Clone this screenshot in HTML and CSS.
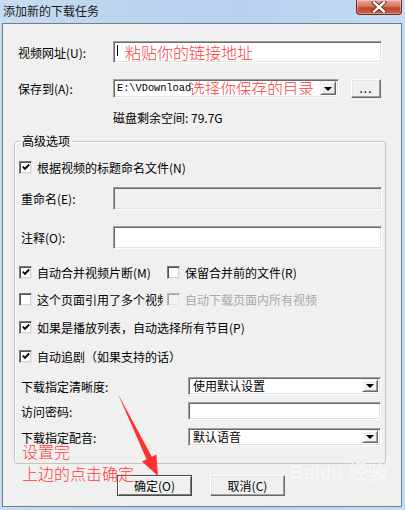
FILE: index.html
```html
<!DOCTYPE html>
<html>
<head>
<meta charset="utf-8">
<link rel="stylesheet" href="styles.css">
</head>
<body>
<div class="window">
  <div class="titlebar">
    <span class="title">添加新的下载任务</span>
    <span class="close">
      <svg width="16" height="12" viewBox="0 0 16 12"><path d="M3 1.5 L13 10.5 M13 1.5 L3 10.5" stroke="#5a2a22" stroke-width="4.2" stroke-linecap="square"/><path d="M3 1.5 L13 10.5 M13 1.5 L3 10.5" stroke="#ffffff" stroke-width="2.4" stroke-linecap="square"/></svg>
    </span>
  </div>
  <div class="client">
    <div class="top">
      <div class="row r-url">
        <span class="lbl">视频网址(U):</span>
        <div class="edit url"><span class="caret"></span><span class="red">粘贴你的链接地址</span></div>
      </div>
      <div class="row r-save">
        <span class="lbl">保存到(A):</span>
        <div class="edit combo save">
          <div class="combo-text"><span class="mono">E:\VDownload</span><span class="red">选择你保存的目录</span></div>
          <span class="dd"><span class="tri"></span></span>
        </div>
        <span class="btn dots">...</span>
      </div>
      <div class="disk">磁盘剩余空间: 79.7G</div>
    </div>

    <fieldset class="group">
      <legend>高级选项</legend>
      <div class="cbrow first">
        <span class="cb checked"><svg width="11" height="11" viewBox="0 0 11 11"><path d="M2 4.5 L4.3 7 L9 2.2" stroke="#000" stroke-width="2" fill="none"/></svg></span>
        <span>根据视频的标题命名文件(N)</span>
      </div>
      <div class="frow rename">
        <span class="flbl">重命名(E):</span>
        <div class="edit wide disabled"></div>
      </div>
      <div class="frow comment">
        <span class="flbl">注释(O):</span>
        <div class="edit wide"></div>
      </div>
      <div class="cbrow c1">
        <div class="col">
          <span class="cb checked"><svg width="11" height="11" viewBox="0 0 11 11"><path d="M2 4.5 L4.3 7 L9 2.2" stroke="#000" stroke-width="2" fill="none"/></svg></span>
          <span class="cbtext">自动合并视频片断(M)</span>
        </div>
        <span class="cb"></span>
        <span>保留合并前的文件(R)</span>
      </div>
      <div class="cbrow c2">
        <div class="col">
          <span class="cb"></span>
          <span class="cbtext clip">这个页面引用了多个视频</span>
        </div>
        <span class="cb off"></span>
        <span class="grey">自动下载页面内所有视频</span>
      </div>
      <div class="cbrow c3">
        <span class="cb checked"><svg width="11" height="11" viewBox="0 0 11 11"><path d="M2 4.5 L4.3 7 L9 2.2" stroke="#000" stroke-width="2" fill="none"/></svg></span>
        <span>如果是播放列表，自动选择所有节目(P)</span>
      </div>
      <div class="cbrow c4">
        <span class="cb checked"><svg width="11" height="11" viewBox="0 0 11 11"><path d="M2 4.5 L4.3 7 L9 2.2" stroke="#000" stroke-width="2" fill="none"/></svg></span>
        <span>自动追剧（如果支持的话）</span>
      </div>
      <div class="brow b1">
        <span class="blbl">下载指定清晰度:</span>
        <div class="edit combo bsel"><div class="combo-text">使用默认设置</div><span class="dd"><span class="tri"></span></span></div>
      </div>
      <div class="brow b2">
        <span class="blbl">访问密码:</span>
        <div class="edit bsel"></div>
      </div>
      <div class="brow b3">
        <span class="blbl">下载指定配音:</span>
        <div class="edit combo bsel"><div class="combo-text">默认语音</div><span class="dd"><span class="tri"></span></span></div>
      </div>
    </fieldset>

    <div class="buttons">
      <span class="btn def">确定(O)</span>
      <span class="btn">取消(C)</span>
    </div>

    <div class="note">设置完<br>上边的点击确定</div>
    <svg class="arrow" width="399" height="482" viewBox="0 0 399 482">
      <polygon points="115,370 148.9,432.7 153.4,430.5 155,452 139,437.5 143.5,435.3" fill="#ff3030"/>
    </svg>
    <div class="watermark">
      <div class="wm-logo">Bai<span class="wm-du">du</span> 经验</div>
      <div class="wm-url">jingyan.baidu.com</div>
    </div>
  </div>
</div>
</body>
</html>
```

FILE: styles.css
```css
html, body {
  margin: 0;
  padding: 0;
}
body {
  width: 405px;
  height: 510px;
  overflow: hidden;
  font-family: "Noto Sans CJK SC", "Liberation Sans", sans-serif;
  font-size: 12px;
  color: #000;
}
.window {
  height: 510px;
  box-sizing: border-box;
  padding: 0 3px 3px 2px;
  display: flex;
  flex-direction: column;
  background: linear-gradient(90deg, #c9dcf1 0%, #bcd4ee 30%, #b8d2ee 60%, #c4dbf2 100%);
}
.titlebar {
  height: 23px;
  display: flex;
  justify-content: space-between;
  align-items: flex-start;
  flex-shrink: 0;
}
.title {
  padding-left: 1px;
  line-height: 21px;
  font-size: 12px;
  color: #1a1a1a;
}
.close {
  width: 46px;
  height: 15px;
  box-sizing: border-box;
  border: 1px solid #6e2a1f;
  border-top: none;
  border-radius: 0 0 4px 4px;
  background: linear-gradient(180deg, #e9a99b 0%, #d8745f 45%, #c4432a 55%, #c95f45 100%);
  display: flex;
  align-items: center;
  justify-content: center;
  box-shadow: inset 0 0 0 1px rgba(255,255,255,0.35);
}
.client {
  flex: 1;
  position: relative;
  background: #f0f0f0;
  border: 1px solid #6f7f93;
}

/* generic controls */
.edit {
  box-sizing: border-box;
  background: #fff;
  border: 1px solid;
  border-color: #a0a0a0 #ffffff #ffffff #a0a0a0;
  box-shadow: inset 1px 1px 0 #696969, inset -1px -1px 0 #e3e3e3;
}
.edit.disabled {
  background: #f0f0f0;
}
.combo {
  display: flex;
  align-items: stretch;
  padding: 1px 2px 2px 2px;
}
.combo-text {
  flex: 1;
  overflow: hidden;
  white-space: nowrap;
  display: flex;
  align-items: center;
  padding-left: 2px;
  line-height: 14px;
}
.dd {
  width: 16px;
  box-sizing: border-box;
  background: #f0f0f0;
  border: 1px solid;
  border-color: #f0f0f0 #696969 #696969 #f0f0f0;
  box-shadow: inset 1px 1px 0 #fff, inset -1px -1px 0 #a0a0a0;
  display: flex;
  align-items: center;
  justify-content: center;
}
.tri {
  width: 0;
  height: 0;
  border-left: 4px solid transparent;
  border-right: 4px solid transparent;
  border-top: 4px solid #000;
  margin-top: 1px;
}
.btn {
  box-sizing: border-box;
  display: flex;
  align-items: center;
  justify-content: center;
  background: #f0f0f0;
  border: 1px solid;
  border-color: #fff #696969 #696969 #fff;
  box-shadow: inset -1px -1px 0 #a0a0a0, inset 1px 1px 0 #e3e3e3;
}
.btn.def {
  border-color: #4a4a4a;
  box-shadow: inset 1px 1px 0 #fff, inset -1px -1px 0 #7a7a7a;
}
.red {
  color: #ff3b3b;
  font-size: 16px;
  font-weight: 300;
  line-height: 16px;
  white-space: nowrap;
}

/* top section */
.top {
  padding-left: 15px;
}
.row {
  display: flex;
  align-items: center;
}
.lbl {
  width: 95px;
  flex-shrink: 0;
}
.r-url {
  margin-top: 17px;
  height: 22px;
}
.url {
  width: 269px;
  height: 22px;
  display: flex;
  align-items: center;
  padding-left: 3px;
}
.caret {
  width: 1px;
  height: 11px;
  background: #000;
  margin-right: 7px;
  margin-top: -4px;
}
.r-save {
  margin-top: 16px;
  height: 19px;
}
.save {
  width: 226px;
  height: 19px;
}
.save .combo-text {
  padding-left: 1px;
}
.mono {
  font-family: "Liberation Mono", "DejaVu Sans Mono", monospace;
  font-size: 10.3px;
  letter-spacing: 0;
}
.save .red {
  margin-left: -2px;
  font-size: 15.6px;
}
.dots {
  width: 30px;
  height: 19px;
  margin-left: 12px;
  line-height: 10px;
  padding-bottom: 2px;
  letter-spacing: 1px;
}
.disk {
  margin-top: 12px;
  padding-left: 95px;
  line-height: 16px;
  height: 16px;
}

/* group box */
.group {
  margin: 7px 0 0 11px;
  padding: 0 0 17px 0;
  width: 372px;
  box-sizing: border-box;
  min-width: 0;
  border: 1px solid #c4c4c4;
  border-radius: 3px;
  box-shadow: inset 1px 1px 0 #fff;
}
.group legend {
  margin-left: 5px;
  padding: 0 2px;
  line-height: 16px;
  font-size: 12px;
}
.cbrow {
  display: flex;
  align-items: center;
  height: 16px;
  padding-left: 4px;
  white-space: nowrap;
}
.cb {
  width: 13px;
  height: 13px;
  box-sizing: border-box;
  flex-shrink: 0;
  background: #fff;
  border: 1px solid;
  border-color: #7a7a7a #e8e8e8 #e8e8e8 #7a7a7a;
  box-shadow: inset 1px 1px 0 #505050, inset -1px -1px 0 #d4d4d4;
  margin-right: 5px;
  display: flex;
  align-items: center;
  justify-content: center;
}
.cb svg {
  margin: 1px 0 0 1px;
}
.cb.off {
  background: #f4f4f4;
  border-color: #b8b8b8 #f0f0f0 #f0f0f0 #b8b8b8;
  box-shadow: inset 1px 1px 0 #a8a8a8, inset -1px -1px 0 #e4e4e4;
}
.col {
  width: 148px;
  display: flex;
  align-items: center;
  flex-shrink: 0;
}
.clip {
  width: 126px;
  overflow: hidden;
}
.grey {
  color: #a8a8a8;
}
.cbrow.first { margin-top: 10px; }
.frow {
  display: flex;
  align-items: center;
  padding-left: 6px;
}
.flbl {
  width: 92px;
  flex-shrink: 0;
}
.wide {
  width: 269px;
  height: 23px;
}
.rename { margin-top: 12px; }
.comment { margin-top: 16px; }
.c1 { margin-top: 15px; }
.c2 { margin-top: 11px; }
.c3 { margin-top: 12px; }
.c4 { margin-top: 13px; }
.brow {
  display: flex;
  align-items: center;
  padding-left: 6px;
}
.blbl {
  width: 167px;
  flex-shrink: 0;
}
.bsel {
  width: 193px;
  height: 18px;
}
.b1 { margin-top: 13px; }
.b2 { margin-top: 7px; }
.b3 { margin-top: 8px; }

/* buttons */
.buttons {
  display: flex;
  gap: 18px;
  margin: 11px 0 0 114px;
}
.buttons .btn {
  width: 75px;
  height: 21px;
}

/* annotations over the dialog */
.note {
  position: absolute;
  left: 19px;
  top: 416px;
  color: #ff3b3b;
  font-size: 16px;
  font-weight: 300;
  line-height: 22px;
}
.arrow {
  position: absolute;
  left: 0;
  top: 0;
  pointer-events: none;
}
.watermark {
  position: absolute;
  left: 286px;
  top: 436px;
  color: rgba(255,255,255,0.75);
  text-shadow: 0 0 1px rgba(120,120,120,0.12);
}
.wm-logo {
  font-family: "Liberation Sans", sans-serif;
  font-size: 20px;
  font-weight: bold;
  line-height: 24px;
}
.wm-du {
  font-size: 18px;
}
.wm-url {
  font-family: "Liberation Serif", serif;
  font-size: 11px;
  line-height: 12px;
  padding-left: 4px;
}
```
